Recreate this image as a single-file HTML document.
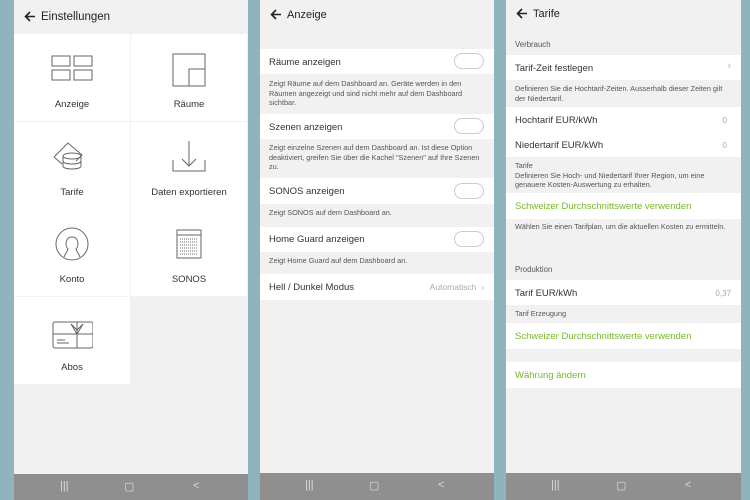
<!DOCTYPE html><html><head><meta charset="utf-8"><style>
*{margin:0;padding:0;box-sizing:border-box}
body{width:750px;height:500px;background:#8fb4bd;position:relative;overflow:hidden;font-family:"Liberation Sans",sans-serif;color:#333}
.p{position:absolute;top:0;height:500px;width:234px;background:#f1f1f1;overflow:hidden}
.nav{position:absolute;left:0;right:0;bottom:0;height:26px;background:#8f8f8f;color:#ddd;font-size:11px}
.nav span{position:absolute;top:6px}
.hd{position:absolute;left:10px;font-size:11px;color:#222}
.hd svg{vertical-align:-2px;margin-right:5px}
.a{position:absolute;left:0;right:0}
.w{background:#fff}
.t{position:absolute;left:9px;font-size:9.5px;color:#333}
.d{position:absolute;left:9px;right:8px;font-size:7.3px;color:#555;line-height:9.5px}
.g{color:#7ab828}
.tg{position:absolute;right:10px;width:30px;height:16px;border:1px solid #ccc;border-radius:8px;background:#fff}
.cell{position:absolute;background:#fff;width:116px;height:87px;font-size:9.5px;text-align:center}
.cell div{position:absolute;left:0;right:0;top:65px}
.cell svg{position:absolute;left:37px;top:18px}
</style></head><body>
<div class="p" style="left:14px">
<div class="hd" style="top:11px;font-size:11.5px"><svg width="12" height="11" fill="none" stroke="#222" stroke-width="1.6"><path d="M11 5.5H2M6 1L1.5 5.5 6 10"/></svg>Einstellungen</div>
<div class="cell" style="left:0;top:34px"><svg width="42" height="30" fill="none" stroke="#666" stroke-width="1"><rect x="1" y="4" width="18" height="10"/><rect x="23" y="4" width="18" height="10"/><rect x="1" y="18" width="18" height="10"/><rect x="23" y="18" width="18" height="10"/></svg><div>Anzeige</div></div>
<div class="cell" style="left:117px;top:34px"><svg width="42" height="36" fill="none" stroke="#666" stroke-width="1"><path d="M5 2h32v32H5z"/><path d="M21 17h16v17H21z"/></svg><div>Räume</div></div>
<div class="cell" style="left:0;top:122px"><svg width="42" height="36" fill="none" stroke="#666" stroke-width="1"><path d="M3 17l14-14 14 12-6 6"/><path d="M3 17l8 7"/><ellipse cx="21" cy="16" rx="9" ry="3"/><path d="M12 16v10c0 4 18 4 18 0V16"/><path d="M12 21c0 4 18 4 18 0"/></svg><div>Tarife</div></div>
<div class="cell" style="left:117px;top:122px"><svg width="42" height="36" fill="none" stroke="#666" stroke-width="1"><path d="M21 1v25M14 19l7 7 7-7M5 20v11h32V20"/></svg><div>Daten exportieren</div></div>
<div class="cell" style="left:0;top:209px"><svg width="42" height="36" fill="none" stroke="#666" stroke-width="1"><circle cx="21" cy="17" r="16"/><path d="M13 30c2-5 4-6 4-8-3-3-3-12 4-12s7 9 4 12c0 2 2 3 4 8"/></svg><div>Konto</div></div>
<div class="cell" style="left:117px;top:209px"><svg width="42" height="36" fill="none" stroke="#666" stroke-width="1"><rect x="9" y="3" width="24" height="28"/><path d="M9 8h24" /><path d="M12 12h18M12 15h18M12 18h18M12 21h18M12 24h18M12 27h18" stroke-dasharray="1 1"/></svg><div>SONOS</div></div>
<div class="cell" style="left:0;top:297px"><svg width="42" height="36" fill="none" stroke="#666" stroke-width="1"><rect x="2" y="7" width="40" height="26" rx="2"/><path d="M26 7v26M2 19h40M6 25h8M6 28h12M26 19l-6-10 6 6 6-6z"/></svg><div>Abos</div></div>
<div class="nav"><span style="left:46px">|||</span><span style="left:110px">▢</span><span style="left:179px">&lt;</span></div>
</div>

<div class="p" style="left:260px">
<div class="hd" style="top:9px"><svg width="12" height="11" fill="none" stroke="#222" stroke-width="1.6"><path d="M11 5.5H2M6 1L1.5 5.5 6 10"/></svg>Anzeige</div>
<div class="a w" style="top:49px;height:25px"></div><div class="t" style="top:57px">Räume anzeigen</div><div class="tg" style="top:53px"></div>
<div class="d" style="top:79px">Zeigt Räume auf dem Dashboard an. Geräte werden in den Räumen angezeigt und sind nicht mehr auf dem Dashboard sichtbar.</div>
<div class="a w" style="top:114px;height:25px"></div><div class="t" style="top:122px">Szenen anzeigen</div><div class="tg" style="top:118px"></div>
<div class="d" style="top:143px">Zeigt einzelne Szenen auf dem Dashboard an. Ist diese Option deaktiviert, greifen Sie über die Kachel "Szenen" auf Ihre Szenen zu.</div>
<div class="a w" style="top:178px;height:26px"></div><div class="t" style="top:186px">SONOS anzeigen</div><div class="tg" style="top:183px"></div>
<div class="d" style="top:208px">Zeigt SONOS auf dem Dashboard an.</div>
<div class="a w" style="top:227px;height:25px"></div><div class="t" style="top:234px">Home Guard anzeigen</div><div class="tg" style="top:231px"></div>
<div class="d" style="top:256px">Zeigt Home Guard auf dem Dashboard an.</div>
<div class="a w" style="top:274px;height:26px"></div><div class="t" style="top:282px">Hell / Dunkel Modus</div><div style="position:absolute;right:10px;top:282px;font-size:8.5px;color:#aaa">Automatisch &nbsp;›</div>
<div class="nav" style="height:27px"><span style="left:45px">|||</span><span style="left:109px">▢</span><span style="left:178px">&lt;</span></div>
</div>

<div class="p" style="left:506px;width:235px">
<div class="hd" style="top:8px"><svg width="12" height="11" fill="none" stroke="#222" stroke-width="1.6"><path d="M11 5.5H2M6 1L1.5 5.5 6 10"/></svg>Tarife</div>
<div class="d" style="top:40px;font-size:7.8px">Verbrauch</div>
<div class="a w" style="top:55px;height:25px"></div><div class="t" style="top:63px">Tarif-Zeit festlegen</div><div style="position:absolute;right:10px;top:60px;color:#bbb;font-size:11px">›</div>
<div class="d" style="top:84px">Definieren Sie die Hochtarif-Zeiten. Ausserhalb dieser Zeiten gilt der Niedertarif.</div>
<div class="a w" style="top:107px;height:50px"></div><div class="t" style="top:115px">Hochtarif EUR/kWh</div><div class="t" style="top:140px">Niedertarif EUR/kWh</div>
<div style="position:absolute;right:14px;top:116px;font-size:8px;color:#aaa">0</div><div style="position:absolute;right:14px;top:141px;font-size:8px;color:#aaa">0</div>
<div class="d" style="top:161px">Tarife<br>Definieren Sie Hoch- und Niedertarif Ihrer Region, um eine genauere Kosten-Auswertung zu erhalten.</div>
<div class="a w" style="top:193px;height:26px"></div><div class="t g" style="top:201px">Schweizer Durchschnittswerte verwenden</div>
<div class="d" style="top:222px">Wählen Sie einen Tarifplan, um die aktuellen Kosten zu ermitteln.</div>
<div class="d" style="top:265px;font-size:7.8px">Produktion</div>
<div class="a w" style="top:280px;height:25px"></div><div class="t" style="top:288px">Tarif EUR/kWh</div><div style="position:absolute;right:10px;top:289px;font-size:8px;color:#aaa">0,37</div>
<div class="d" style="top:309px">Tarif Erzeugung</div>
<div class="a w" style="top:323px;height:26px"></div><div class="t g" style="top:331px">Schweizer Durchschnittswerte verwenden</div>
<div class="a w" style="top:362px;height:26px"></div><div class="t g" style="top:370px">Währung ändern</div>
<div class="nav" style="height:27px"><span style="left:45px">|||</span><span style="left:110px">▢</span><span style="left:179px">&lt;</span></div>
</div>
</body></html>
